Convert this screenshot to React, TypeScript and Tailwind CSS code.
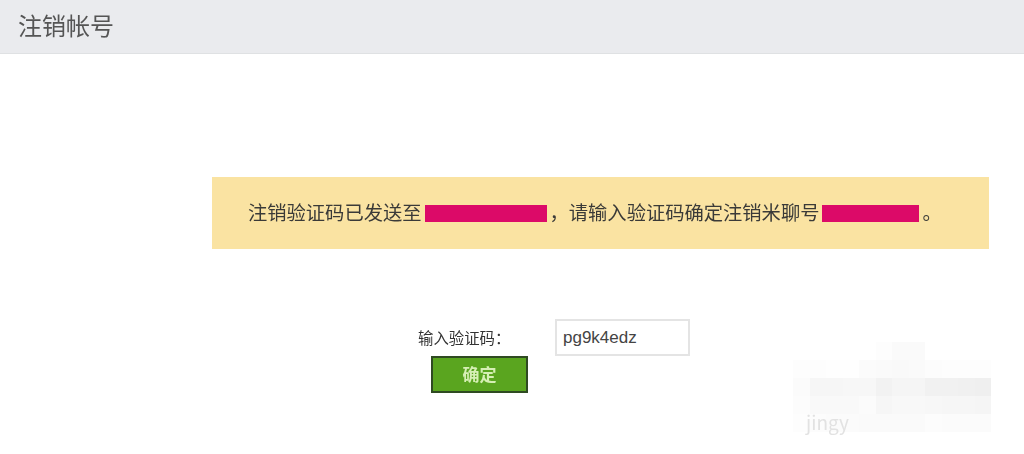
const mosaic = [
  ["#ffffff", "#ffffff", "#ffffff", "#ffffff", "#ffffff", "#fdfdfd", "#fafafa", "#fafafa", "#ffffff", "#ffffff", "#ffffff", "#ffffff"],
  ["#fdfdfd", "#fdfdfd", "#fefefe", "#fefefe", "#fbfbfb", "#fafafa", "#f9f9f9", "#fafafa", "#fcfcfc", "#fdfdfd", "#fdfdfd", "#fdfdfd"],
  ["#fbfbfb", "#f6f6f6", "#f6f6f6", "#f7f7f7", "#f7f7f7", "#f2f2f2", "#f5f5f5", "#f5f5f5", "#f1f1f1", "#f1f1f1", "#f0f0f0", "#efefef"],
  ["#fcfcfc", "#f9f9f9", "#f9f9f9", "#f9f9f9", "#fbfbfb", "#f6f6f6", "#f8f8f8", "#f8f8f8", "#f7f7f7", "#f6f6f6", "#f6f6f6", "#f5f5f5"],
  ["#fdfdfd", "#fcfcfc", "#fbfbfb", "#fbfbfb", "#fafafa", "#fafafa", "#fafafa", "#fafafa", "#fcfcfc", "#fbfbfb", "#fbfbfb", "#fbfbfb"],
];

function Redacted({ width }: { width: string }) {
  return <span className={`mx-[3px] inline-block h-[17px] bg-[#dc0a68] align-[-3px] ${width}`} />;
}

export default function App() {
  return (
    <div
      className="relative h-[454px] w-[1024px] overflow-hidden bg-white text-[#333]"
      style={{ fontFamily: '"Noto Sans CJK SC", "Liberation Sans", sans-serif' }}
    >
      <header className="flex h-[54px] items-center border-b border-[#dfe1e3] bg-[#eaebee] pl-[18px] pb-[3px]">
        <h1 className="text-[24px] font-normal leading-none text-[#555] blur-[0.4px]">注销帐号</h1>
      </header>

      <section className="ml-[212px] mt-[123px] flex h-[72px] w-[777px] items-center whitespace-nowrap bg-[#fae3a2] pl-[36px] text-[19.3px] leading-none text-[#3a3a38]">
        <span className="blur-[0.4px]">注销验证码已发送至</span>
        <Redacted width="w-[122px]" />
        <span className="blur-[0.4px]">，</span>
        <span className="blur-[0.4px]">请输入验证码确定注销米聊号</span>
        <Redacted width="w-[97px]" />
        <span className="blur-[0.4px]">。</span>
      </section>

      <form className="ml-[418px] mt-[70px]">
        <div className="flex h-[37px] items-center">
          <label className="w-[137px] text-[15.4px] leading-none text-[#333] blur-[0.3px]">输入验证码：</label>
          <input
            readOnly
            value="pg9k4edz"
            className="h-[37px] w-[135px] border-2 border-[#e4e4e4] bg-white pl-[6px] text-[17px] text-[#444] outline-none"
            style={{ fontFamily: '"Liberation Sans", sans-serif' }}
          />
        </div>
        <button
          type="button"
          className="ml-[13px] block h-[37px] w-[97px] border-2 border-[#2f4a22] bg-[#5aa51f] pb-[3px] text-[17px] font-bold leading-none text-[#d6efb4] blur-[0.3px]"
        >
          确定
        </button>
      </form>

      {/* pixelated watermark over the bottom right corner */}
      <div aria-hidden className="absolute left-[793px] top-[342px] flex flex-col">
        {mosaic.map((row, r) => (
          <div key={r} className="flex h-[18px]">
            {row.map((color, c) => (
              <div key={c} className="h-full w-[16.5px]" style={{ backgroundColor: color }} />
            ))}
          </div>
        ))}
      </div>
      <span className="absolute left-[806px] top-[412px] text-[19px] leading-none text-[#e2e2e2] blur-[0.6px]">jingy</span>
    </div>
  );
}
